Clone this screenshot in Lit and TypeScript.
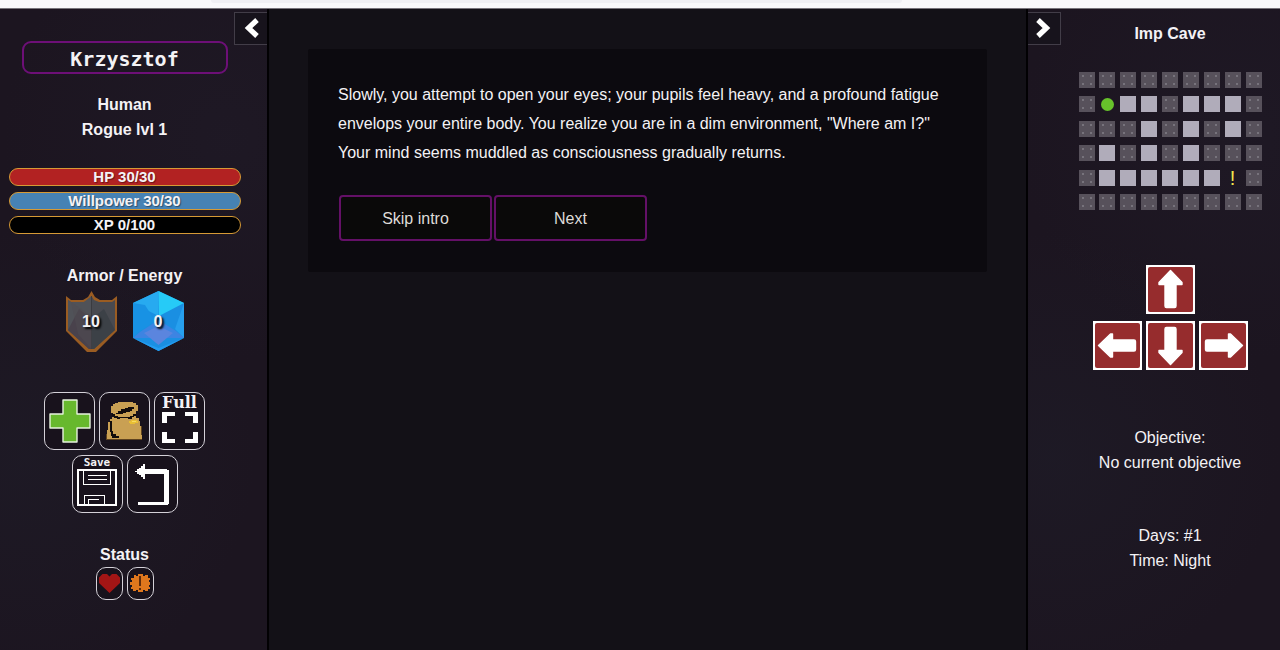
import { LitElement, html, css, svg } from "lit";
import { customElement } from "lit/decorators.js";

const MAP = [
  "#########",
  "#@..#...#",
  "###.#.#.#",
  "#.#.#.###",
  "#......!#",
  "#########",
];

const CELL_CLASS: Record<string, string> = {
  "#": "cell wall",
  ".": "cell floor",
  "@": "cell player",
  "!": "cell quest",
};

const arrow = (angle: number) => svg`
  <svg viewBox="0 0 49 49" width="49" height="49" aria-hidden="true">
    <rect width="49" height="49" fill="#fff" />
    <rect x="2" y="2" width="45" height="45" rx="2" fill="#962c2d" />
    <path
      transform="rotate(${angle} 24.5 24.5)"
      d="M24.5 5.5 L36 17.5 V19.5 H30 V41 Q30 42.5 28.5 42.5 H20.5 Q19 42.5 19 41 V19.5 H13 V17.5 Z"
      fill="#fff" stroke="#fff" stroke-width="1.4" stroke-linejoin="round"
    />
  </svg>`;

const chevron = (d: string) => svg`
  <svg viewBox="0 0 32 32" width="32" height="32" aria-hidden="true">
    <path d=${d} fill="none" stroke="#fff" stroke-width="5.200" />
  </svg>`;

const shield = svg`
  <svg class="gem-art" viewBox="0 0 51 61" width="51" height="61" aria-hidden="true">
    <path d="M0 5 L5 9 H17 L22 6 L25.500 0 L29 6 L34 9 H46 L51 5 V40 L30 61 H21 L0 40 Z" fill="#9a5c22" />
    <path d="M2 9 L5 11 H18 L23 9 L25.500 5 L28 9 L33 11 H46 L49 9 V39 L28 58 H23 L2 39 Z" fill="#484a50" />
    <path d="M25.500 5 L18 11 H5 L2 9 V39 L10 46 L25.500 25 Z" fill="#505258" />
    <path d="M2 39 L23 58 H25.500 V28 L13 18 Z" fill="#49424c" />
    <path d="M25.500 28 L38 18 L49 39 L28 58 H25.500 Z" fill="#3c4147" />
    <path d="M25.500 5 V58" stroke="#3a3b40" stroke-width="1" />
    <path d="M5 11 L25.500 25 V58 L12 43 Z" fill="#504c52" opacity=".5" />
  </svg>`;

const crystal = svg`
  <svg class="gem-art" viewBox="0 0 51 61" width="51" height="61" aria-hidden="true">
    <path d="M25.500 0 L51 12 V47 L25.500 60 L0 47 V12 Z" fill="#1a8fe2" />
    <path d="M25.500 0 V25 L0 12 Z" fill="#27aaf0" />
    <path d="M25.500 0 L51 12 L26 25 Z" fill="#26cbf7" />
    <path d="M0 12 L12 14 L22 30 L7 40 L0 47 Z" fill="#1892e4" />
    <path d="M51 12 L42 38 L51 47 Z" fill="#27a0ee" />
    <path d="M7 41 L25.500 29 L43 40 L51 47 H0 Z" fill="#3d84e2" />
    <path d="M11 42 L25.500 35 L40 42 L25.500 54 Z" fill="#5b85de" />
    <path d="M0 47 L25.500 57 L51 47 L25.500 60 Z" fill="#239cf0" />
  </svg>`;

const plusIcon = svg`
  <svg viewBox="0 0 42 44" width="42" height="44" aria-hidden="true">
    <path d="M14 1 H28 V15 H41 V29 H28 V43 H14 V29 H1 V15 H14 Z"
      fill="#67b82d" stroke="#e6f2dd" stroke-width="1.4" stroke-linejoin="round" />
  </svg>`;

const bagIcon = svg`
  <svg viewBox="0 0 37 40" width="37" height="40" aria-hidden="true" shape-rendering="crispEdges">
    <path d="M9 2 H12 V1 H27 V2 H30 V4 H32 V10 H30 V13 H27 V15 H30 V17 H33 V20 H34 V25 H35 V34 H36 V38 H1 V29 H2 V21 H4 V18 H6 V16 H8 V14 H7 V12 H5 V5 H7 V3 H9 Z" fill="#c9a053" />
    <path d="M10 12 H12 V10 H15 V8 H19 V7 H22 V6 H28 V8 H26 V10 H24 V11 H20 V12 H17 V13 H10 Z" fill="#120d0c" />
    <path d="M6 13 H9 V15 H12 V16 H24 V15 H27 V13 H30 V15 H28 V16 H26 V18 H22 V17 H14 V18 H11 V17 H8 V15 H6 Z" fill="#120d0c" />
    <path d="M4 20 H6 V30 H7 V33 H10 V35 H13 V37 H6 V35 H5 V31 H4 Z" fill="#120d0c" />
    <path d="M0 33 H1 V38 H36 V39 H0 Z M35 25 H36 V34 H35 Z" fill="#5f431f" />
    <path d="M23 20 H25 V19 H31 V20 H32 V22 H29 V23 H24 V22 H23 Z" fill="#e9bf35" />
    <path d="M26 20 H30 V21 H26 Z" fill="#f8dc62" />
  </svg>`;

const fullIcon = svg`
  <svg viewBox="0 0 36 31" width="36" height="31" aria-hidden="true" shape-rendering="crispEdges">
    <path d="M0 0 H13 V4 H5 V11 H0 Z M23 0 H36 V11 H31 V4 H23 Z M0 20 H5 V27 H13 V31 H0 Z M31 20 H36 V31 H23 V27 H31 Z" fill="#fff" />
  </svg>`;

const saveIcon = svg`
  <svg viewBox="0 0 40 37" width="40" height="37" aria-hidden="true" shape-rendering="crispEdges"
    fill="none" stroke="#fff" stroke-width="1">
    <path d="M1 1 H39 V36 H1 Z" stroke-width="2" />
    <path d="M6.500 2 V15.500 H33.500 V2 M11 6.500 H30 M11 10.500 H30 M7.500 35 V26.500 H27.500 V35 M11.500 35 V30.500 H22" />
  </svg>`;

const backIcon = svg`
  <svg viewBox="0 0 35 41" width="35" height="41" aria-hidden="true" shape-rendering="crispEdges">
    <path d="M0 7 H2 V5 H4 V4 H6 V2 H8 V0 H10 V5 H32 V6 H34 V40 H33 V41 H3 V38 H29 V10 H10 V15 H8 V13 H6 V11 H4 V10 H2 V8 H0 Z" fill="#fff" />
  </svg>`;

const heartIcon = svg`
  <svg viewBox="0 0 21 19" width="21" height="19" aria-hidden="true">
    <path d="M10.500 19 L0 9 V3.500 L3.500 0 H8 L10.500 2.500 L13 0 H17.500 L21 3.500 V9 Z" fill="#a31515" />
  </svg>`;

const alertIcon = svg`
  <svg viewBox="0 0 21 19" width="21" height="19" aria-hidden="true" shape-rendering="crispEdges">
    <path d="M4 1 H6 V2 H8 V0 H13 V2 H15 V1 H18 V4 H20 V6 H19 V8 H20 V11 H19 V13 H20 V15 H18 V17 H15 V16 H13 V18 H8 V16 H6 V17 H3 V15 H1 V13 H2 V11 H0 V8 H2 V6 H1 V4 H4 Z" fill="#df771d" />
    <path d="M9 2 H11 V12 H9 Z M9 14 H11 V16 H9 Z" fill="#5e2c0c" />
  </svg>`;

@customElement("app-root")
export class AppRoot extends LitElement {
  static styles = css`
    :host {
      display: flex;
      flex-direction: column;
      min-height: 100vh;
      background: #131117;
      color: #f4f2f5;
      font: 16px/25px "Liberation Sans", Arial, sans-serif;
    }
    * { box-sizing: border-box; }
    h1, h2, p { margin: 0; font-size: 16px; }
    svg { display: block; }
    button {
      margin: 0;
      padding: 0;
      color: inherit;
      font: inherit;
      cursor: pointer;
    }
    .chrome {
      display: flex;
      justify-content: center;
      height: 9px;
      padding-right: 167px;
      background: #f9f9fb;
      border-bottom: 1px solid #77747b;
    }
    .address {
      width: 62%;
      height: 3px;
      border-radius: 0 0 4px 4px;
      background: #f0f0f4;
    }
    .layout {
      flex: 1;
      display: grid;
      grid-template-columns: 269px 1fr 254px;
    }
    .side {
      display: grid;
      align-items: start;
      background:
        radial-gradient(circle at 10% 70%, #1f1e2a80, transparent 45%),
        radial-gradient(circle at 85% 20%, #201b2890, transparent 40%),
        #1c1520;
    }
    .left {
      border-right: 2px solid #020103;
    }
    .right {
      grid-template-columns: 32px 1fr;
      border-left: 2px solid #020103;
    }
    .stack {
      display: flex;
      flex-direction: column;
      align-items: center;
      text-align: center;
    }
    .left .stack {
      grid-area: 1 / 1;
      margin-right: 18px;
      padding-top: 32px;
      font-weight: bold;
    }
    .right .stack { padding-top: 12px; }
    .toggle {
      width: 33px;
      height: 33px;
      margin-top: 3px;
      border: 1px solid #423d48;
      background: #17131c;
    }
    .left .toggle {
      grid-area: 1 / 1;
      justify-self: end;
      z-index: 1;
      border-right: 0;
    }
    .right .toggle { border-left: 0; }
    .name {
      width: 206px;
      height: 33px;
      border: 2px solid #6d0f77;
      border-radius: 9px;
      font: bold 20px/32px "DejaVu Sans Mono", monospace;
    }
    .person { margin-top: 18px; }
    .bars {
      display: grid;
      gap: 6px;
      width: 232px;
      margin-top: 26px;
      font-size: 15px;
      line-height: 16px;
    }
    .bar {
      height: 18px;
      border: 1px solid #d69a35;
      border-radius: 9px;
      text-shadow: 1px 1px 1px #0006;
    }
    .hp { background: #b22222; }
    .will { background: #4682b4; }
    .xp { background: #000; }
    .gems-title { margin-top: 29px; }
    .gems {
      display: flex;
      gap: 16px;
      margin-top: 3px;
    }
    .gem {
      display: grid;
      place-items: center;
      text-shadow: 2px 2px 2px #000;
    }
    .gem-art, .gem-value { grid-area: 1 / 1; }
    .tools {
      display: flex;
      flex-wrap: wrap;
      justify-content: center;
      gap: 5px 4px;
      width: 170px;
      margin-top: 40px;
    }
    .tool {
      display: flex;
      flex-direction: column;
      align-items: center;
      justify-content: center;
      width: 51px;
      height: 58px;
      border: 1px solid #d4d1d8;
      border-radius: 10px;
      background: #18121c;
    }
    .labelled { justify-content: flex-start; }
    .full-label {
      font: bold 16px/19px "DejaVu Serif", serif;
    }
    .save-label {
      font: bold 11px/13px "DejaVu Sans Mono", monospace;
    }
    .status-title { margin-top: 29px; }
    .statuses {
      display: flex;
      gap: 4px;
    }
    .status {
      display: grid;
      place-items: center;
      width: 27px;
      height: 33px;
      border: 1px solid #d4d1d8;
      border-radius: 10px;
      background: #18121c;
    }
    .map {
      display: grid;
      grid-template-columns: repeat(9, 16px);
      grid-auto-rows: 16px;
      justify-content: space-between;
      align-content: space-between;
      width: 183px;
      height: 138px;
      margin-top: 26px;
    }
    .cell {
      display: grid;
      place-items: center;
      line-height: 16px;
    }
    .wall {
      background:
        radial-gradient(circle, #77737c 0, #77737c 1px, transparent 1px) 0 0 / 8px 8px,
        #57515b;
    }
    .floor { background: #b0acba; }
    .player::before {
      content: "";
      width: 13px;
      height: 13px;
      border-radius: 50%;
      background: #67c22b;
    }
    .quest {
      color: #f3e74d;
      font-size: 20px;
    }
    .pad {
      display: flex;
      flex-wrap: wrap;
      justify-content: center;
      gap: 7px 4px;
      width: 155px;
      margin-top: 55px;
    }
    .move {
      border: 0;
      background: none;
    }
    .up { margin: 0 53px; }
    .objective { margin-top: 55px; }
    .clock { margin-top: 48px; }
    .main { padding: 40px 5%; }
    @media (min-width: 900px) {
      .main { padding: 40px 39px; }
    }
    .story {
      padding: 31px 30px;
      border-radius: 2px;
      background: #0c0a0f;
      line-height: 29px;
    }
    .choices {
      display: flex;
      gap: 2px;
      margin-top: 28px;
      padding-left: 1px;
    }
    .choice {
      width: 153px;
      height: 46px;
      border: 2px solid #641067;
      border-radius: 4px;
      background: #0a0909;
      color: #dedbd8;
    }
  `;

  render() {
    return html`
      <div class="chrome"><div class="address"></div></div>
      <div class="layout">
        <aside class="side left">
          <button class="toggle" aria-label="Hide character panel">${chevron("M22 7 L13.500 15 L22 23")}</button>
          <div class="stack">
            <h1 class="name">Krzysztof</h1>
            <div class="person">
              <p>Human</p>
              <p>Rogue lvl 1</p>
            </div>
            <div class="bars">
              <div class="bar hp">HP 30/30</div>
              <div class="bar will">Willpower 30/30</div>
              <div class="bar xp">XP 0/100</div>
            </div>
            <h2 class="gems-title">Armor / Energy</h2>
            <div class="gems">
              <div class="gem">${shield}<span class="gem-value">10</span></div>
              <div class="gem">${crystal}<span class="gem-value">0</span></div>
            </div>
            <div class="tools">
              <button class="tool" aria-label="Heal">${plusIcon}</button>
              <button class="tool" aria-label="Inventory">${bagIcon}</button>
              <button class="tool labelled"><span class="full-label">Full</span>${fullIcon}</button>
              <button class="tool labelled"><span class="save-label">Save</span>${saveIcon}</button>
              <button class="tool" aria-label="Back">${backIcon}</button>
            </div>
            <h2 class="status-title">Status</h2>
            <div class="statuses">
              <div class="status">${heartIcon}</div>
              <div class="status">${alertIcon}</div>
            </div>
          </div>
        </aside>

        <main class="main">
          <section class="story">
            <p>
              Slowly, you attempt to open your eyes; your pupils feel heavy, and a profound fatigue
              envelops your entire body. You realize you are in a dim environment, "Where am I?"
              Your mind seems muddled as consciousness gradually returns.
            </p>
            <div class="choices">
              <button class="choice">Skip intro</button>
              <button class="choice">Next</button>
            </div>
          </section>
        </main>

        <aside class="side right">
          <button class="toggle" aria-label="Hide map panel">${chevron("M10 7 L18.500 15 L10 23")}</button>
          <div class="stack">
            <h2>Imp Cave</h2>
            <div class="map">
              ${MAP.join("").split("").map(
                (c) => html`<span class=${CELL_CLASS[c]}>${c === "!" ? "!" : ""}</span>`
              )}
            </div>
            <div class="pad">
              <button class="move up" aria-label="Go north">${arrow(0)}</button>
              <button class="move" aria-label="Go west">${arrow(270)}</button>
              <button class="move" aria-label="Go south">${arrow(180)}</button>
              <button class="move" aria-label="Go east">${arrow(90)}</button>
            </div>
            <div class="objective">
              <p>Objective:</p>
              <p>No current objective</p>
            </div>
            <div class="clock">
              <p>Days: #1</p>
              <p>Time: Night</p>
            </div>
          </div>
        </aside>
      </div>
    `;
  }
}
